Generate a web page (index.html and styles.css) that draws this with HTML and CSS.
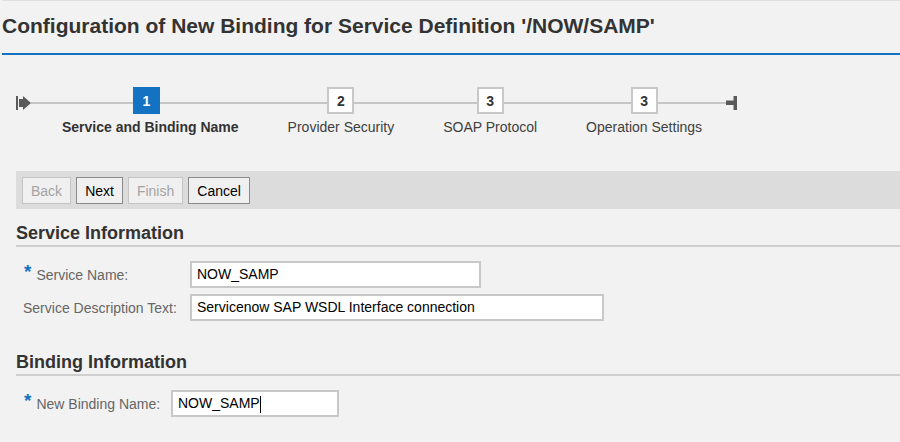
FILE: index.html
```html
<!DOCTYPE html>
<html lang="en">
  <head>
    <meta charset="UTF-8" />
    <title>Configuration of New Binding</title>
    <link rel="stylesheet" href="styles.css">
  </head>
  <body>
    <h1 class="page-title">Configuration of New Binding for Service Definition '/NOW/SAMP'</h1>

    <div class="roadmap">
      <svg class="rm-start" width="16" height="14" viewBox="0 0 16 14">
        <rect x="1" y="0" width="2" height="14" />
        <rect x="4" y="3" width="4.5" height="8" />
        <path d="M8 0 L16 7 L8 14 Z" />
      </svg>

      <div class="steps">
        <div class="step current">
          <div class="step-num">1</div>
          <div class="step-label">Service and Binding Name</div>
        </div>
        <div class="step">
          <div class="step-num">2</div>
          <div class="step-label">Provider Security</div>
        </div>
        <div class="step">
          <div class="step-num">3</div>
          <div class="step-label">SOAP Protocol</div>
        </div>
        <div class="step">
          <div class="step-num">3</div>
          <div class="step-label">Operation Settings</div>
        </div>
      </div>

      <svg class="rm-end" width="11" height="14" viewBox="0 0 11 14">
        <rect x="0" y="4.5" width="8" height="4.5" />
        <rect x="7.5" y="0" width="3.5" height="14" />
      </svg>
    </div>

    <div class="toolbar">
      <button class="btn" disabled>Back</button>
      <button class="btn">Next</button>
      <button class="btn" disabled>Finish</button>
      <button class="btn">Cancel</button>
    </div>

    <div class="section">
      <h2 class="section-title">Service Information</h2>
      <div class="form form-service">
        <label class="field-label"><span class="req">*</span>Service Name:</label>
        <div class="field field-name">NOW_SAMP</div>
        <label class="field-label">Service Description Text:</label>
        <div class="field field-desc">Servicenow SAP WSDL Interface connection</div>
      </div>
    </div>

    <div class="section section-binding">
      <h2 class="section-title">Binding Information</h2>
      <div class="form form-binding">
        <label class="field-label"><span class="req">*</span>New Binding Name:</label>
        <div class="field field-binding">NOW_SAMP<span class="caret"></span></div>
      </div>
    </div>
  </body>
</html>
```

FILE: styles.css
```css
:root {
  --blue: #1472c2;
  --text: #333333;
  --label: #666666;
  --background: #f2f2f2;
  --toolbar: #dcdcdc;
  --rule: #cfcfcf;
}

body {
  margin: 0;
  background: var(--background);
  color: var(--text);
  font-family: "Liberation Sans", Arial, sans-serif;
  font-size: 14px;
  overflow: hidden;
}

.page-title {
  margin: 0 0 0 2px;
  height: 52px;
  line-height: 50px;
  font-size: 21px;
  font-weight: bold;
  color: var(--text);
  border-top: 1px solid #dedede;
  border-bottom: 2px solid var(--blue);
}

/* roadmap */
.roadmap {
  display: flex;
  align-items: flex-start;
  width: fit-content;
  position: relative;
  margin: 32px 0 0 15px;
}

.roadmap::before {
  content: "";
  position: absolute;
  left: 16px;
  right: 11px;
  top: 15px;
  height: 2px;
  background: #c6c6c6;
}

.rm-start,
.rm-end {
  fill: #5a5a5a;
  margin-top: 9px;
  position: relative;
}

.steps {
  display: flex;
  gap: 49px;
  margin-left: 31px;
}

.rm-end {
  margin-left: 24px;
}

.step {
  display: flex;
  flex-direction: column;
  align-items: center;
}

.step-num {
  position: relative;
  box-sizing: border-box;
  width: 27px;
  height: 27px;
  display: flex;
  align-items: center;
  justify-content: center;
  background: #ffffff;
  border: 2px solid #c8c8c8;
  font-weight: bold;
  color: var(--text);
}

.step.current .step-num {
  background: var(--blue);
  border-color: var(--blue);
  color: #ffffff;
  margin-right: 8px;
}

.step-label {
  margin-top: 5px;
  line-height: 16px;
  color: #404040;
  white-space: nowrap;
}

.step.current .step-label {
  font-weight: bold;
  color: var(--text);
}

/* toolbar */
.toolbar {
  display: flex;
  gap: 5px;
  margin: 36px 0 0 16px;
  padding: 6px 6px 5px;
  background: var(--toolbar);
}

.btn {
  height: 27px;
  padding: 0 8px;
  background: #f0f0f0;
  border: 1px solid #8a8a8a;
  font-family: "Liberation Sans", Arial, sans-serif;
  font-size: 14px;
  color: #000000;
  cursor: pointer;
}

.btn:disabled {
  color: #a4a4a4;
  border-color: #c4c4c4;
  cursor: default;
}

/* sections */
.section {
  margin-left: 16px;
}

.section-title {
  margin: 13px 0 0;
  font-size: 18px;
  line-height: 22px;
  padding-bottom: 1px;
  border-bottom: 2px solid var(--rule);
  color: var(--text);
}

.section-binding .section-title {
  margin-top: 30px;
}

.form {
  display: grid;
  row-gap: 6px;
  align-items: center;
  justify-content: start;
  margin-top: 14px;
  padding-left: 7px;
}

.form-service {
  grid-template-columns: 167px auto;
}

.form-binding {
  grid-template-columns: 148px auto;
}

.field-label {
  color: var(--label);
  line-height: 16px;
  white-space: nowrap;
}

.req {
  color: var(--blue);
  font-weight: bold;
  font-size: 19px;
  line-height: 0;
  vertical-align: 2px;
  margin-right: 5px;
  margin-left: 1px;
}

.field {
  box-sizing: border-box;
  height: 27px;
  line-height: 23px;
  padding: 0 5px;
  background: #ffffff;
  border: 2px solid #c8c8c8;
  color: #000000;
  white-space: nowrap;
}

.field-name {
  width: 291px;
}

.field-desc {
  width: 414px;
}

.field-binding {
  width: 168px;
}

.caret {
  display: inline-block;
  width: 1px;
  height: 17px;
  background: #000000;
  vertical-align: middle;
}
```
